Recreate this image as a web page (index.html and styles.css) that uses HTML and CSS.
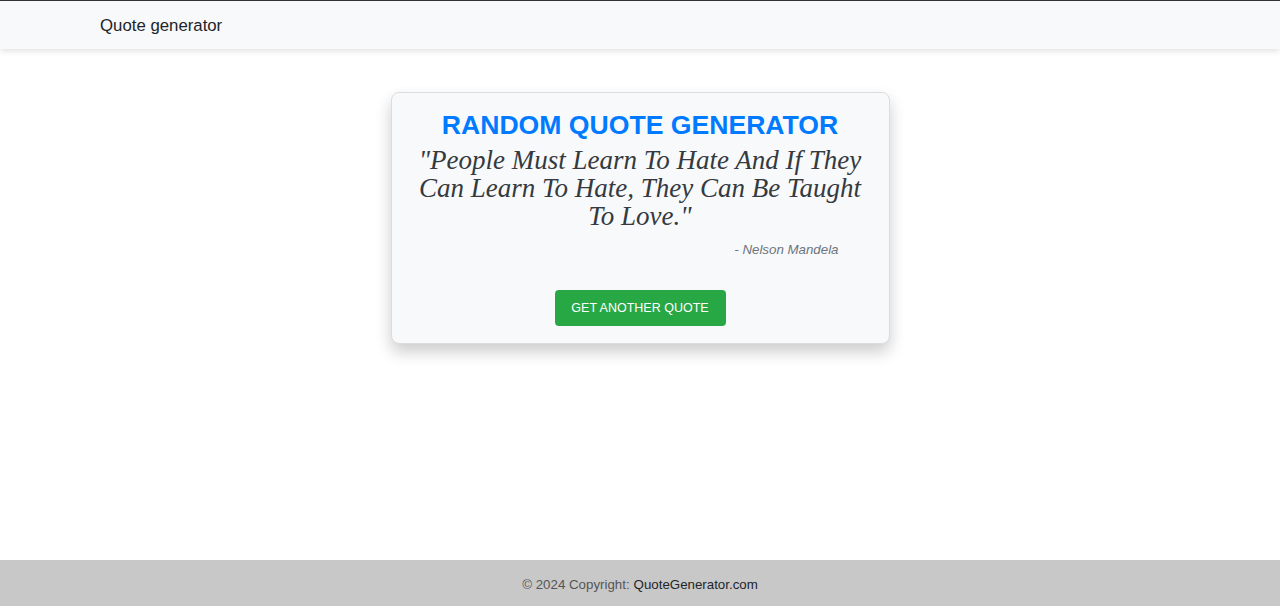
FILE: index.html
```html
<!DOCTYPE html>
<html lang="en">
<head>
<meta charset="utf-8">
<title>Quote generator</title>
<link rel="stylesheet" href="styles.css">
</head>
<body>
<div class="page">
  <nav class="navbar">
    <span class="brand">Quote generator</span>
  </nav>
  <main class="main">
    <div class="card">
      <h1 class="title">RANDOM QUOTE GENERATOR</h1>
      <p class="quote">"People Must Learn To Hate And If They Can Learn To Hate, They Can Be Taught To Love."</p>
      <p class="author">- Nelson Mandela</p>
      <button class="btn">GET ANOTHER QUOTE</button>
    </div>
  </main>
  <footer class="footer">
    © 2024 Copyright: <a class="footer-link" href="#">QuoteGenerator.com</a>
  </footer>
</div>
</body>
</html>
```

FILE: styles.css
```css
* { box-sizing: border-box; }
html, body { margin: 0; padding: 0; height: 100%; }
body {
  font-family: "Liberation Sans", Arial, sans-serif;
  color: #212529;
  background: #fff;
  border-top: 1px solid #333;
}
.page {
  display: flex;
  flex-direction: column;
  min-height: 605px;
}
.navbar {
  height: 48px;
  background: #f8f9fa;
  display: flex;
  align-items: center;
  padding-left: 100px;
  padding-top: 2px;
  box-shadow: 0 2px 6px rgba(0,0,0,0.12);
  position: relative;
  z-index: 1;
}
.brand {
  font-size: 16.8px;
  color: #212529;
}
.main {
  flex: 1;
  display: flex;
  justify-content: center;
  align-items: flex-start;
  padding-top: 43px;
}
.card {
  width: 499px;
  background: #f8f9fa;
  border: 1px solid #dcdcdc;
  border-radius: 8px;
  box-shadow: 0 8px 16px rgba(0,0,0,0.2);
  padding: 13px 20px 17px;
  display: flex;
  flex-direction: column;
  align-items: center;
  text-align: center;
}
.title {
  margin: 0;
  font-size: 26.6px;
  font-weight: bold;
  color: #007bff;
  line-height: 38px;
}
.quote {
  margin: 2px 0 0;
  font-family: "Liberation Serif", "Times New Roman", serif;
  font-style: italic;
  font-size: 27px;
  line-height: 28px;
  color: #343a40;
}
.author {
  align-self: flex-end;
  margin: 12px 30px 0 0;
  font-style: italic;
  font-size: 13.3px;
  color: #6c757d;
}
.btn {
  margin-top: 33px;
  width: 171px;
  height: 36px;
  background: #28a745;
  color: #fff;
  border: none;
  border-radius: 4px;
  font-family: "Liberation Sans", Arial, sans-serif;
  font-size: 12.5px;
}
.footer {
  height: 46px;
  background: #c8c8c8;
  display: flex;
  align-items: center;
  justify-content: center;
  padding-top: 2px;
  font-size: 13.3px;
  color: #555;
}
.footer-link {
  color: #212529;
  text-decoration: none;
  margin-left: 4px;
}
```
